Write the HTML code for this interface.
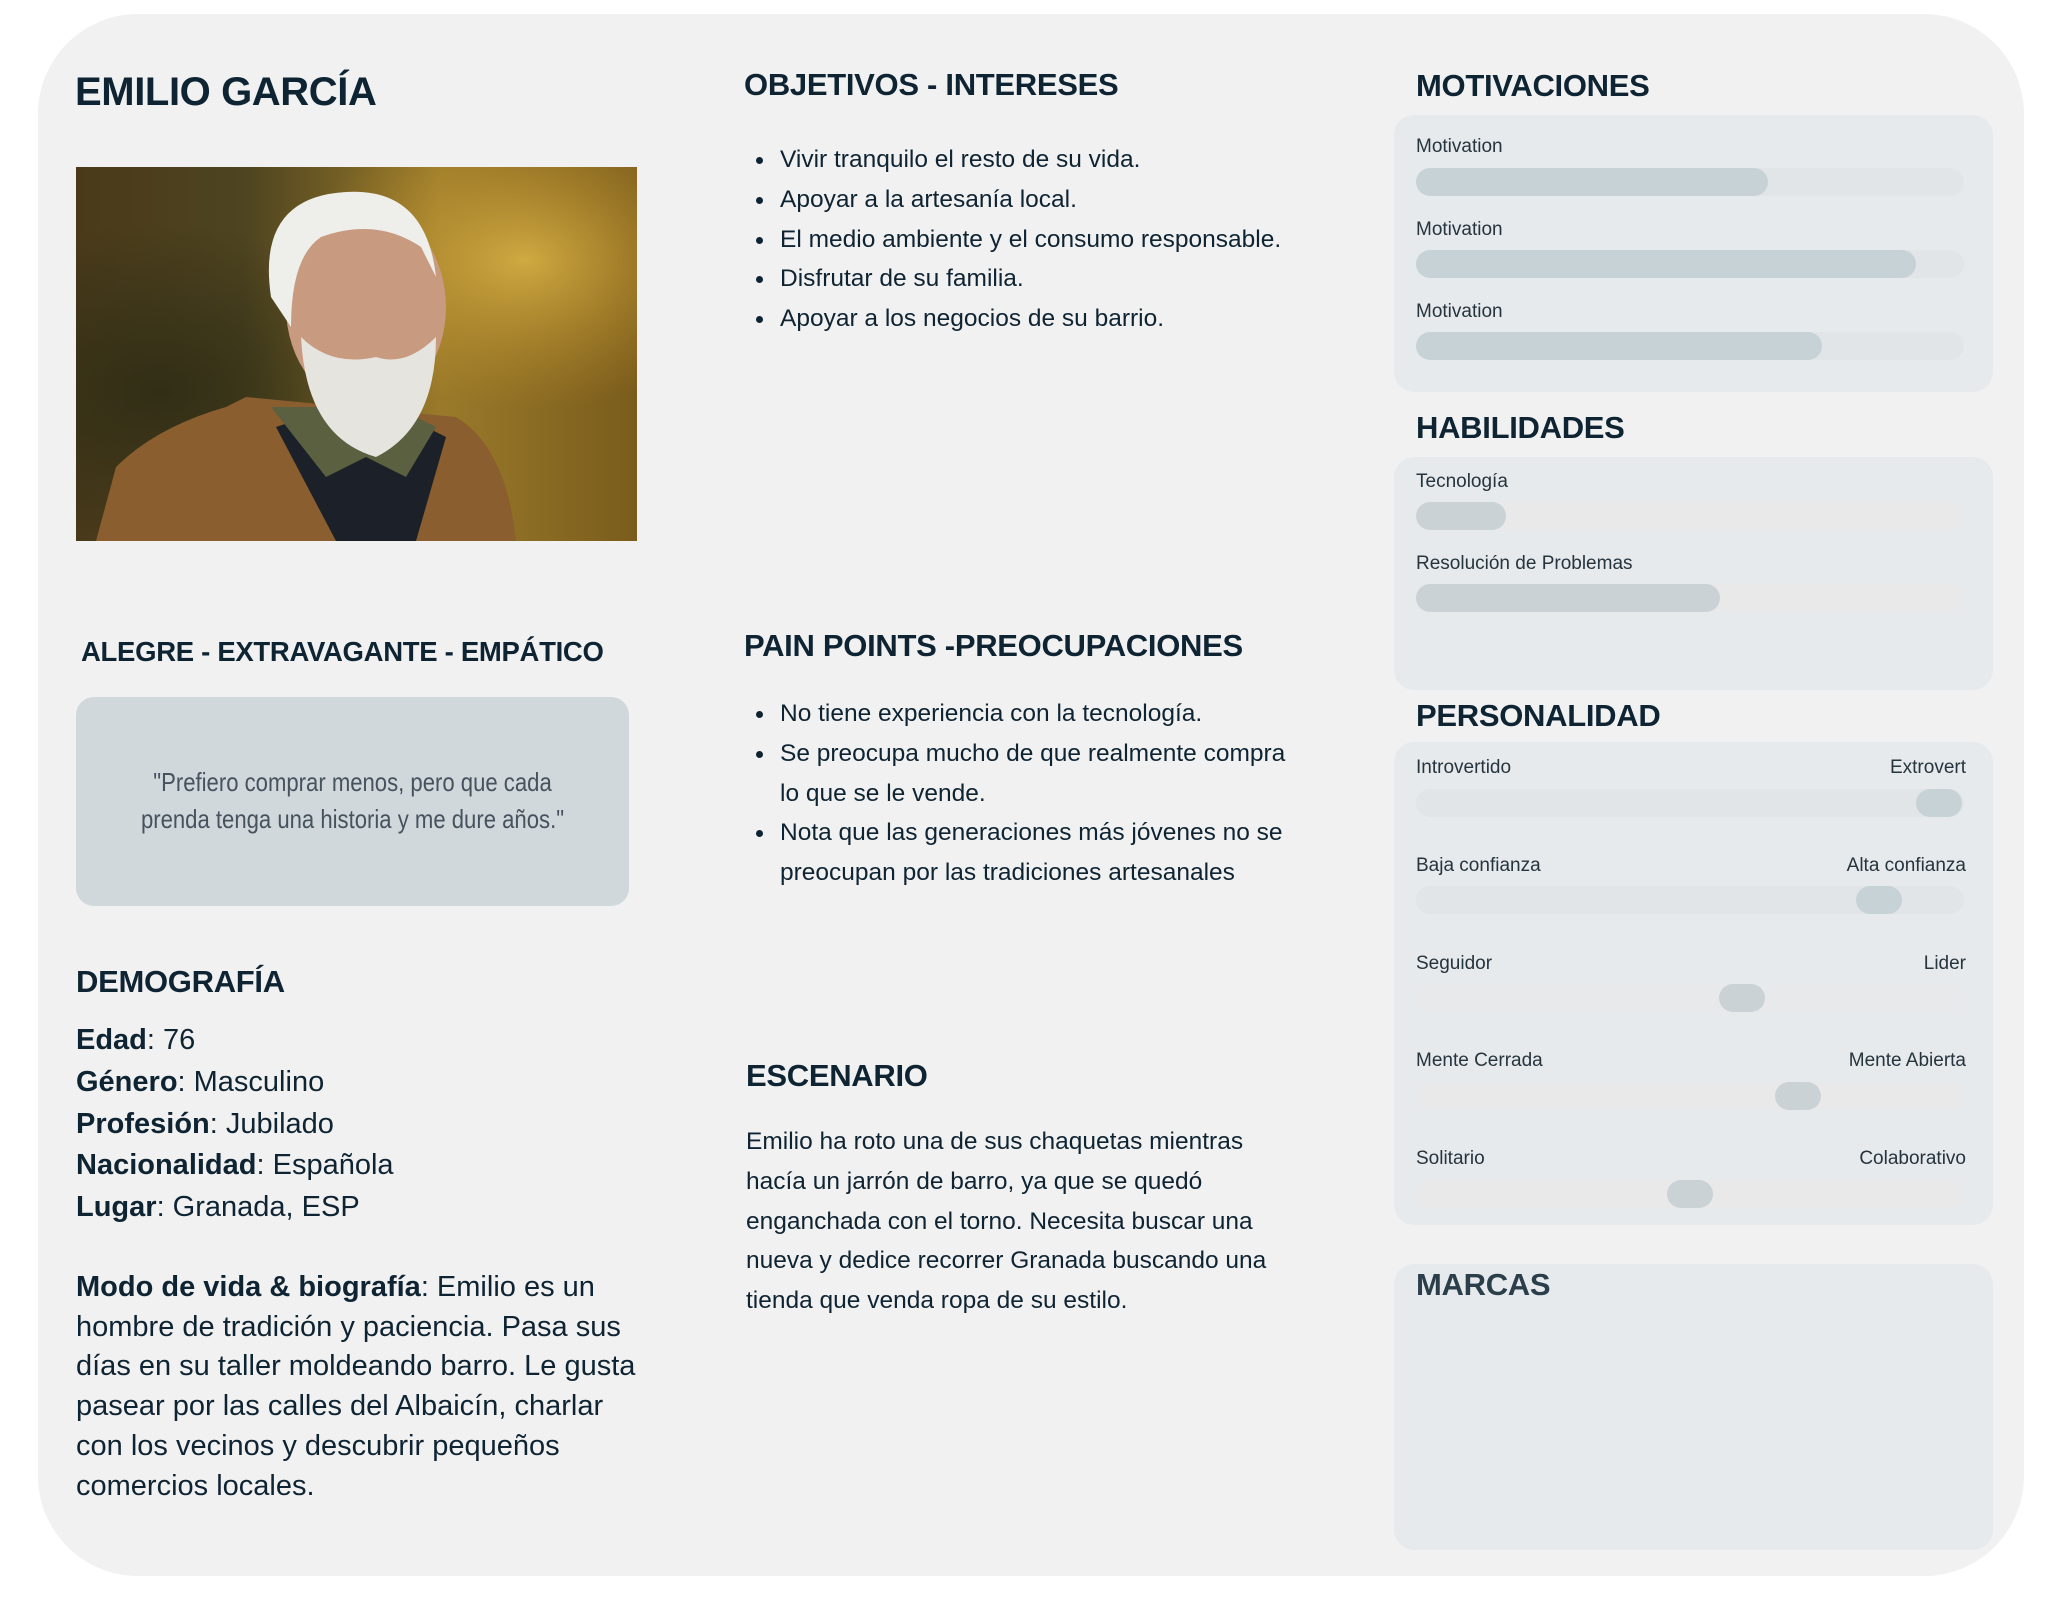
<!DOCTYPE html>
<html><head><meta charset="utf-8"><style>
*{margin:0;padding:0;box-sizing:border-box}
html,body{width:2048px;height:1598px;background:#fff;overflow:hidden}
body{position:relative;font-family:"Liberation Sans",sans-serif;color:#0f2433}
.a{position:absolute;white-space:nowrap}
.card{position:absolute;left:38px;top:14px;width:1986px;height:1562px;background:#f1f1f1;border-radius:100px}
h1,h2{position:absolute;font-weight:bold;white-space:nowrap;letter-spacing:-0.3px}
.h2{font-size:31px;line-height:40px}
.box{position:absolute;background:#e7eaed;border-radius:20px}
.lbl{position:absolute;font-size:19px;line-height:24px;color:#26343d;white-space:nowrap}
.trk{position:absolute;height:28px;border-radius:14px;background:#e1e5e7}
.fill{position:absolute;left:0;top:0;height:28px;border-radius:14px;background:#c7d2d7}
.knob{position:absolute;top:0;width:46px;height:28px;border-radius:14px;background:#c7d2d7}
ul{position:absolute;list-style:none;font-size:24.5px;line-height:39.8px;white-space:nowrap}
ul li{position:relative;padding-left:36px}
ul li:before{content:"";position:absolute;left:12px;top:17px;width:7px;height:7px;border-radius:50%;background:#0f2433}
.p{position:absolute;font-size:24.5px;line-height:39.8px;white-space:nowrap}
.demo{position:absolute;left:76px;font-size:29px;line-height:41.8px;white-space:nowrap}
</style></head><body>
<div class="card"></div>

<h1 class="a" style="left:75px;top:67px;font-size:40px;line-height:50px;letter-spacing:-0.4px">EMILIO GARCÍA</h1>

<svg class="a" style="left:76px;top:167px" width="561" height="374" viewBox="0 0 561 374">
<defs>
<linearGradient id="bg" x1="0" x2="1" y1="0" y2="0"><stop offset="0" stop-color="#4a3a1a"/><stop offset="0.3" stop-color="#4e4420"/><stop offset="0.65" stop-color="#9a7a2a"/><stop offset="1" stop-color="#7a5c1c"/></linearGradient>
<radialGradient id="bk" cx="0.8" cy="0.25" r="0.4"><stop offset="0" stop-color="#e0b848" stop-opacity="0.8"/><stop offset="1" stop-color="#c0902a" stop-opacity="0"/></radialGradient>
<radialGradient id="dk" cx="0.15" cy="0.6" r="0.45"><stop offset="0" stop-color="#2a2a14" stop-opacity="0.8"/><stop offset="1" stop-color="#2a2a14" stop-opacity="0"/></radialGradient>
</defs>
<rect width="561" height="374" fill="url(#bg)"/>
<rect width="561" height="374" fill="url(#bk)"/>
<rect width="561" height="374" fill="url(#dk)"/>
<path d="M20 374 L40 300 Q80 260 150 240 L170 230 L380 250 Q430 280 440 374Z" fill="#8a5e2e"/>
<path d="M200 260 L260 374 L340 374 L370 270 L330 250 L230 250Z" fill="#1c2028"/>
<path d="M195 240 L250 310 L290 290 L330 310 L360 260 L320 240Z" fill="#5a6040"/>
<ellipse cx="290" cy="140" rx="80" ry="100" fill="#c89a80"/>
<path d="M195 130 Q180 30 270 25 Q350 20 360 110 L345 80 Q300 50 245 70 Q215 90 215 160Z" fill="#eeeeea"/>
<path d="M225 170 Q230 270 300 290 Q360 260 360 170 Q330 200 300 190 Q255 200 225 170Z" fill="#e6e4de"/>
</svg>

<h2 class="a" style="left:81px;top:636px;font-size:27.5px;line-height:32px">ALEGRE - EXTRAVAGANTE - EMPÁTICO</h2>

<div class="a" style="left:76px;top:697px;width:553px;height:209px;background:#d0d8dc;border-radius:18px"></div>
<div class="a" style="left:76px;top:764px;width:553px;text-align:center;font-size:26px;line-height:37px;color:#46525e;transform:scaleX(0.85);transform-origin:center">"Prefiero comprar menos, pero que cada<br>prenda tenga una historia y me dure años."</div>

<h2 class="a h2" style="left:76px;top:962px">DEMOGRAFÍA</h2>
<div class="demo" style="top:1020px"><b>Edad</b>: 76<br><b>Género</b>: Masculino<br><b>Profesión</b>: Jubilado<br><b>Nacionalidad</b>: Española<br><b>Lugar</b>: Granada, ESP</div>
<div class="demo" style="top:1268px;line-height:39.7px"><b>Modo de vida &amp; biografía</b>: Emilio es un<br>hombre de tradición y paciencia. Pasa sus<br>días en su taller moldeando barro. Le gusta<br>pasear por las calles del Albaicín, charlar<br>con los vecinos y descubrir pequeños<br>comercios locales.</div>

<h2 class="a h2" style="left:744px;top:65px">OBJETIVOS - INTERESES</h2>
<ul style="left:744px;top:140px"><li>Vivir tranquilo el resto de su vida.</li><li>Apoyar a la artesanía local.</li><li>El medio ambiente y el consumo responsable.</li><li>Disfrutar de su familia.</li><li>Apoyar a los negocios de su barrio.</li></ul>

<h2 class="a h2" style="left:744px;top:626px">PAIN POINTS -PREOCUPACIONES</h2>
<ul style="left:744px;top:694px"><li>No tiene experiencia con la tecnología.</li><li>Se preocupa mucho de que realmente compra<br>lo que se le vende.</li><li>Nota que las generaciones más jóvenes no se<br>preocupan por las tradiciones artesanales</li></ul>

<h2 class="a h2" style="left:746px;top:1056px">ESCENARIO</h2>
<div class="p" style="left:746px;top:1122px">Emilio ha roto una de sus chaquetas mientras<br>hacía un jarrón de barro, ya que se quedó<br>enganchada con el torno. Necesita buscar una<br>nueva y dedice recorrer Granada buscando una<br>tienda que venda ropa de su estilo.</div>

<h2 class="a h2" style="left:1416px;top:66px">MOTIVACIONES</h2>
<div class="box" style="left:1394px;top:115px;width:599px;height:277px"></div>
<div class="lbl" style="left:1416px;top:135px">Motivation</div>
<div class="trk" style="left:1416px;top:168px;width:548px"><div class="fill" style="width:352px"></div></div>
<div class="lbl" style="left:1416px;top:218px">Motivation</div>
<div class="trk" style="left:1416px;top:250px;width:548px"><div class="fill" style="width:500px"></div></div>
<div class="lbl" style="left:1416px;top:300px">Motivation</div>
<div class="trk" style="left:1416px;top:332px;width:548px"><div class="fill" style="width:406px"></div></div>

<h2 class="a h2" style="left:1416px;top:408px">HABILIDADES</h2>
<div class="box" style="left:1394px;top:457px;width:599px;height:233px"></div>
<div class="lbl" style="left:1416px;top:470px">Tecnología</div>
<div class="trk" style="left:1416px;top:502px;width:548px;background:#e9e9e9"><div class="fill" style="width:90px;background:#cad2d6"></div></div>
<div class="lbl" style="left:1416px;top:552px">Resolución de Problemas</div>
<div class="trk" style="left:1416px;top:584px;width:548px;background:#e9e9e9"><div class="fill" style="width:304px;background:#cad2d6"></div></div>

<h2 class="a h2" style="left:1416px;top:696px">PERSONALIDAD</h2>
<div class="box" style="left:1394px;top:742px;width:599px;height:483px"></div>
<div class="lbl" style="left:1416px;top:756px">Introvertido</div><div class="lbl" style="right:82px;top:756px">Extrovert</div>
<div class="trk" style="left:1416px;top:789px;width:548px"><div class="knob" style="left:500px"></div></div>
<div class="lbl" style="left:1416px;top:854px">Baja confianza</div><div class="lbl" style="right:82px;top:854px">Alta confianza</div>
<div class="trk" style="left:1416px;top:886px;width:548px"><div class="knob" style="left:440px"></div></div>
<div class="lbl" style="left:1416px;top:952px">Seguidor</div><div class="lbl" style="right:82px;top:952px">Lider</div>
<div class="trk" style="left:1416px;top:984px;width:548px;background:#e7e9ea"><div class="knob" style="left:303px;background:#cad2d6"></div></div>
<div class="lbl" style="left:1416px;top:1049px">Mente Cerrada</div><div class="lbl" style="right:82px;top:1049px">Mente Abierta</div>
<div class="trk" style="left:1416px;top:1082px;width:548px;background:#e9e9e9"><div class="knob" style="left:359px;background:#cad2d6"></div></div>
<div class="lbl" style="left:1416px;top:1147px">Solitario</div><div class="lbl" style="right:82px;top:1147px">Colaborativo</div>
<div class="trk" style="left:1416px;top:1180px;width:548px;background:#e9e9e9"><div class="knob" style="left:251px;background:#cad2d6"></div></div>

<div class="box" style="left:1394px;top:1264px;width:599px;height:286px"></div>
<h2 class="a h2" style="left:1416px;top:1265px;color:#2b3f4b">MARCAS</h2>
</body></html>
